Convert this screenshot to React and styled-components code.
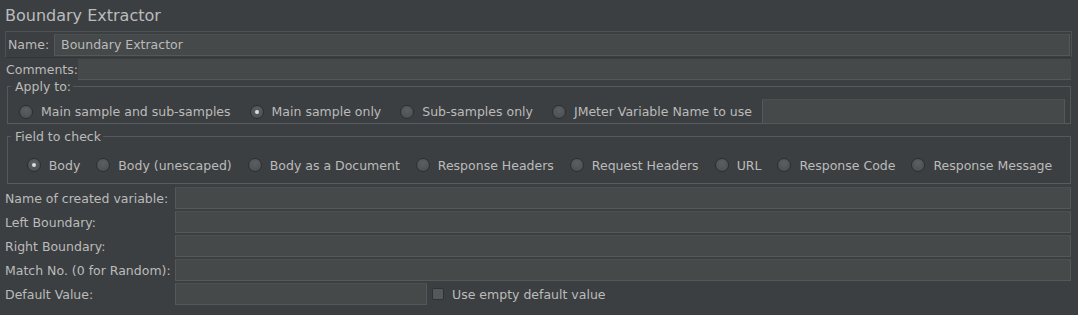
import React from 'react';
import styled, { createGlobalStyle } from 'styled-components';

const GlobalStyle = createGlobalStyle`
  html, body {
    margin: 0;
    padding: 0;
    background: #3c3f41;
  }
  body {
    font-family: "DejaVu Sans", "Liberation Sans", sans-serif;
    color: #bbbbbb;
  }
`;

const Page = styled.div`
  width: 1078px;
  height: 315px;
  background: #3c3f41;
  box-sizing: border-box;
  font-size: 12.5px;
  overflow: hidden;
`;

const Title = styled.div`
  height: 31px;
  padding-left: 5px;
  font-size: 16px;
  line-height: 32px;
  color: #bbbbbb;
  box-sizing: border-box;
`;

const NamePanel = styled.div`
  display: flex;
  align-items: center;
  margin: 0 6px 0 5px;
  height: 27px;
  border: 1px solid #4f5254;
  border-bottom-color: #333537;
  box-sizing: border-box;
  padding: 0 1px 0 2px;
`;

const Label = styled.span`
  white-space: nowrap;
  padding-right: ${(p) => p.$pad || 0}px;
`;

const TextField = styled.div`
  flex: ${(p) => (p.$width ? 'none' : 1)};
  width: ${(p) => (p.$width ? `${p.$width}px` : 'auto')};
  height: ${(p) => p.$h || 22}px;
  margin-left: ${(p) => p.$ml || 0}px;
  background: #45494a;
  border: 1px solid #555859;
  border-top-color: #4c4f51;
  box-sizing: border-box;
  padding-left: 6px;
  line-height: 20px;
  color: #bbbbbb;
`;

const CommentsRow = styled.div`
  display: flex;
  align-items: center;
  height: 22px;
  margin: 0 7px 0 6px;
`;

const CommentsField = styled.div`
  flex: 1;
  height: 21px;
  background: #45494a;
  border-bottom: 1px solid #55585a;
  box-sizing: border-box;
`;

const Group = styled.fieldset`
  margin: ${(p) => p.$mt}px 7px 0 7px;
  padding: 0 5px 0 ${(p) => p.$pl}px;
  border: 1px solid #56595b;
  border-bottom-color: #5a5d5f;
  height: ${(p) => p.$h}px;
  box-sizing: border-box;
  min-width: 0;
`;

const Legend = styled.legend`
  padding: 0 2px 0 4px;
  margin-left: ${(p) => p.$ml}px;
  font-size: 12.5px;
  line-height: 13px;
  color: #bbbbbb;
`;

const RadioRow = styled.div`
  display: flex;
  align-items: center;
  justify-content: ${(p) => (p.$center ? 'center' : 'flex-start')};
  gap: ${(p) => p.$gap}px;
  height: ${(p) => p.$h}px;
  padding-top: ${(p) => p.$pt || 0}px;
  box-sizing: border-box;
`;

const RadioItem = styled.label`
  display: flex;
  align-items: center;
  gap: 8px;
  white-space: nowrap;
`;

const Circle = styled.span`
  width: 14px;
  height: 14px;
  border-radius: 50%;
  background: radial-gradient(circle at 50% 35%, #5b5f61, #4a4d4f);
  border: 1px solid #2c2e30;
  box-sizing: border-box;
  display: flex;
  align-items: center;
  justify-content: center;
  flex: none;
  &::after {
    content: '';
    width: 4px;
    height: 4px;
    border-radius: 50%;
    background: ${(p) => (p.$on ? '#dcdcdc' : 'transparent')};
  }
`;

const Radio = ({ label, on }) => (
  <RadioItem>
    <Circle $on={on} />
    {label}
  </RadioItem>
);

const Form = styled.div`
  display: grid;
  grid-template-columns: 170px 1fr;
  row-gap: 2px;
  margin: 3px 7px 0 5px;
  align-items: center;
`;

const InlineRow = styled.div`
  display: flex;
  align-items: center;
  gap: 5px;
`;

const CheckBox = styled.span`
  width: 12px;
  height: 12px;
  background: #55585a;
  border: 1px solid #2f3133;
  border-radius: 2px;
  box-sizing: border-box;
  margin-right: 3px;
`;

const fieldOptions = [
  ['Body', true],
  ['Body (unescaped)'],
  ['Body as a Document'],
  ['Response Headers'],
  ['Request Headers'],
  ['URL'],
  ['Response Code'],
  ['Response Message'],
];

const App = () => (
  <Page>
    <GlobalStyle />
    <Title>Boundary Extractor</Title>
    <NamePanel>
      <Label $pad={5}>Name:</Label>
      <TextField $h={22}>Boundary Extractor</TextField>
    </NamePanel>
    <CommentsRow>
      <Label>Comments:</Label>
      <CommentsField />
    </CommentsRow>
    <Group $mt={0} $h={44} $pl={11}>
      <Legend $ml={-8}>Apply to:</Legend>
      <RadioRow $h={33} $pt={4} $gap={19}>
        <Radio label="Main sample and sub-samples" />
        <Radio label="Main sample only" on />
        <Radio label="Sub-samples only" />
        <Radio label="JMeter Variable Name to use" />
        <TextField $h={25} $ml={-9} />
      </RadioRow>
    </Group>
    <Group $mt={6} $h={54} $pl={6}>
      <Legend $ml={-3}>Field to check</Legend>
      <RadioRow $h={40} $pt={4} $gap={16} $center>
        {fieldOptions.map(([l, on]) => (
          <Radio key={l} label={l} on={on} />
        ))}
      </RadioRow>
    </Group>
    <Form>
      <Label>Name of created variable:</Label>
      <TextField />
      <Label>Left Boundary:</Label>
      <TextField />
      <Label>Right Boundary:</Label>
      <TextField />
      <Label>Match No. (0 for Random):</Label>
      <TextField />
      <Label>Default Value:</Label>
      <InlineRow>
        <TextField $width={252} />
        <CheckBox />
        <span>Use empty default value</span>
      </InlineRow>
    </Form>
  </Page>
);

export default App;
